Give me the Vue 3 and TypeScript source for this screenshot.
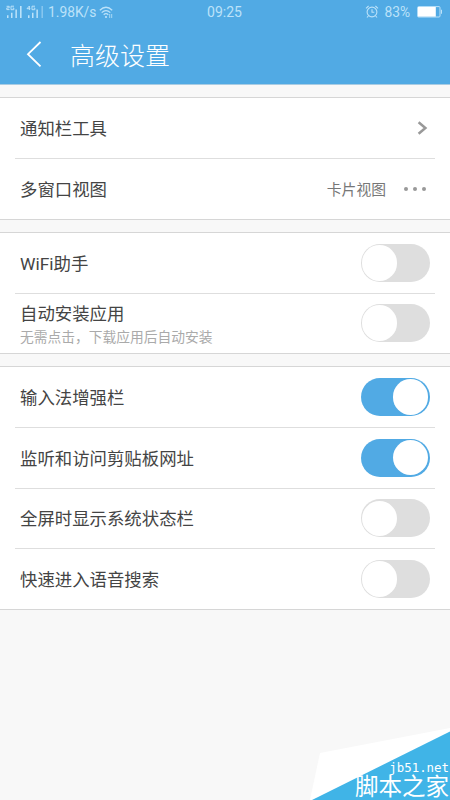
<script setup lang="ts">
import { ref } from 'vue'

interface Row {
  label: string
  note?: string
  kind: 'link' | 'choice' | 'toggle'
  value?: string
  on?: boolean
}

const groups = ref<{ name: string; rows: Row[] }[]>([
  {
    name: 'tools',
    rows: [
      { label: '通知栏工具', kind: 'link' },
      { label: '多窗口视图', kind: 'choice', value: '卡片视图' },
    ],
  },
  {
    name: 'network',
    rows: [
      { label: 'WiFi助手', kind: 'toggle', on: false },
      { label: '自动安装应用', note: '无需点击，下载应用后自动安装', kind: 'toggle', on: false },
    ],
  },
  {
    name: 'input',
    rows: [
      { label: '输入法增强栏', kind: 'toggle', on: true },
      { label: '监听和访问剪贴板网址', kind: 'toggle', on: true },
      { label: '全屏时显示系统状态栏', kind: 'toggle', on: false },
      { label: '快速进入语音搜索', kind: 'toggle', on: false },
    ],
  },
])
</script>

<template>
  <div class="screen">
    <header class="header">
      <div class="status">
        <div class="status-left">
          <svg class="signals" width="38" height="14" viewBox="0 0 38 14">
            <g fill="none" stroke="currentColor" stroke-width="1">
              <path d="M.6 1.3h2.6v1.6H.8v1.7h2.7M8 1.2H5v3.5h2.8V3H6.6" />
              <path d="M23.4 5V1L21 3.7h3.4M29 1.2h-3v3.5h2.8V3h-1.2" />
            </g>
            <g fill="currentColor">
              <path d="M1 10.3h1.5V13H1zM5 7.8h1.5V13H5zM9.4 4.5h1.5V13H9.4zM14 1h1.6v12H14z" />
              <path d="M22 10.3h1.5V13H22zM26 7.8h1.5V13H26zM30.4 4.5h1.5V13h-1.5z" />
              <path d="M35.4 1H37v12h-1.6z" opacity=".5" />
            </g>
          </svg>
          <span class="speed">1.98K/s</span>
          <svg class="wifi" width="15" height="13" viewBox="0 0 15 13">
            <g fill="none" stroke="currentColor" stroke-width="1.2">
              <path d="M.8 4.2Q7 -1.7 13.2 4.2M2.7 6.6Q7 2.5 11.3 6.6M4.7 8.8Q7 6.6 9.3 8.8" />
              <path d="M10.7 8v4M12.7 8v4" stroke-width=".8" />
            </g>
            <circle cx="7" cy="11" r="1.1" fill="currentColor" />
          </svg>
        </div>
        <span class="clock">09:25</span>
        <div class="status-right">
          <svg width="14" height="14" viewBox="0 0 14 14" fill="none" stroke="currentColor" stroke-width="1.1">
            <circle cx="7" cy="7" r="4.9" />
            <path d="M1 3.4 3.6 1M13 3.4 10.4 1M7 4.2v3.1h2.3M3.3 11 2 12.5M10.7 11l1.3 1.5" />
          </svg>
          <span class="percent">83%</span>
          <svg class="battery" width="26" height="12" viewBox="0 0 26 12">
            <rect x=".6" y=".6" width="22.4" height="10.4" rx="1" fill="none" stroke="currentColor" />
            <rect x="1" y="1" width="17.8" height="9.6" fill="#fff" />
            <path d="M24 3.8h1v4h-1z" fill="currentColor" />
          </svg>
        </div>
      </div>
      <div class="title-bar">
        <svg class="back" width="16" height="28" viewBox="0 0 16 28">
          <path d="M14.5 2 2 14.2 14.5 26.4" fill="none" stroke="#fff" stroke-width="1.8" />
        </svg>
        <h1>高级设置</h1>
      </div>
    </header>

    <main>
      <section v-for="group in groups" :key="group.name" class="group" :class="group.name">
        <div v-for="row in group.rows" :key="row.label" class="row">
          <div class="text">
            <span class="label">{{ row.label }}</span>
            <span v-if="row.note" class="note">{{ row.note }}</span>
          </div>
          <svg v-if="row.kind === 'link'" class="chevron" width="11" height="14" viewBox="0 0 11 14">
            <path d="M1.6 1.2 8.4 7 1.6 12.8" fill="none" stroke="#999" stroke-width="2.5" />
          </svg>
          <div v-else-if="row.kind === 'choice'" class="choice">
            <span>{{ row.value }}</span>
            <span class="dots"><i /><i /><i /></span>
          </div>
          <button
            v-else
            type="button"
            class="switch"
            :class="{ on: row.on }"
            role="switch"
            :aria-checked="row.on"
            @click="row.on = !row.on"
          />
        </div>
      </section>
    </main>

    <div class="corner">
      <svg class="corner-shape" width="150" height="74" viewBox="0 0 150 74">
        <path d="M10 74 20 27 150 2v72z" fill="#fff" />
        <path d="M12 74 150 5.5V74z" fill="#40b4e7" />
      </svg>
      <div class="corner-text">
        <span class="site">jb51.net</span>
        <span class="name">脚本之家</span>
      </div>
    </div>
  </div>
</template>

<style>
body {
  margin: 0;
}
</style>

<style scoped>
.screen {
  position: relative;
  box-sizing: border-box;
  width: 450px;
  height: 800px;
  overflow: hidden;
  background: #f8f8f8;
  color: #444;
  font-family: Roboto, 'Noto Sans CJK SC', sans-serif;
}
.header {
  box-sizing: border-box;
  height: 85px;
  background: #51aae4;
  border-bottom: 1px solid #a9cce3;
}
.status {
  display: grid;
  grid-template-columns: 1fr auto 1fr;
  align-items: center;
  height: 24px;
  padding: 0 7px 0 6px;
  color: #bce2f9;
  font-size: 14px;
  font-weight: 400;
  line-height: 24px;
}
.status-left,
.status-right {
  display: flex;
  align-items: center;
}
.status-right {
  justify-content: flex-end;
}
.speed {
  margin-left: 4px;
  font-size: 13.8px;
}
.wifi {
  margin-left: 3px;
}
.percent {
  margin: 0 7px 0 5px;
  font-size: 13.8px;
}
.title-bar {
  display: flex;
  align-items: center;
  height: 60px;
  padding-left: 26px;
}
.back {
  margin-right: 28px;
}
h1 {
  margin: 0;
  padding-top: 5px;
  color: #fff;
  font-size: 25px;
  font-weight: 300;
  line-height: 36px;
}
main {
  display: flex;
  flex-direction: column;
  gap: 12px;
  padding-top: 12px;
}
.group {
  display: flex;
  flex-direction: column;
  box-sizing: border-box;
  height: 122px;
  background: #fff;
  border-top: 1px solid #d6d6d6;
  border-bottom: 1px solid #d6d6d6;
}
.group.tools {
  height: 123px;
}
.group.input {
  height: 244px;
}
.row {
  display: flex;
  flex: 1;
  align-items: center;
  justify-content: space-between;
  box-sizing: border-box;
  margin: 0 15px;
  padding: 0 5px;
}
.row + .row {
  border-top: 1px solid #dedede;
}
.text {
  display: flex;
  flex-direction: column;
  padding-top: 2px;
}
.label {
  font-size: 17.4px;
  line-height: 26px;
}
.note {
  color: #aaa;
  font-size: 13.75px;
  line-height: 20px;
}
.chevron {
  margin-right: 2px;
}
.choice {
  display: flex;
  align-items: center;
  gap: 18px;
  padding-right: 4px;
  color: #777;
  font-size: 14.8px;
  line-height: 20px;
}
.choice > span:first-child {
  padding-top: 1px;
}
.dots {
  display: flex;
  gap: 5px;
}
.dots i {
  width: 4px;
  height: 4px;
  border-radius: 50%;
  background: #999;
}
.switch {
  display: flex;
  align-items: center;
  box-sizing: border-box;
  width: 69px;
  height: 38px;
  margin-right: 0.5px;
  padding: 0 1.3px;
  border: 0;
  border-radius: 19px;
  background: #dedede;
}
.switch::before {
  content: '';
  width: 35.6px;
  height: 35.6px;
  border-radius: 50%;
  background: #fff;
}
.switch.on {
  justify-content: flex-end;
  background: #51aae4;
}
.corner {
  position: absolute;
  right: 0;
  bottom: 0;
  display: grid;
}
.corner-shape,
.corner-text {
  grid-area: 1 / 1;
}
.corner-text {
  display: flex;
  flex-direction: column;
  align-items: flex-end;
  justify-content: flex-end;
  padding-right: 1px;
  color: #fff;
}
.site {
  font-family: 'DejaVu Sans Mono', monospace;
  font-size: 12.4px;
  line-height: 15px;
}
.name {
  font-size: 23.5px;
  line-height: 25px;
}
</style>
